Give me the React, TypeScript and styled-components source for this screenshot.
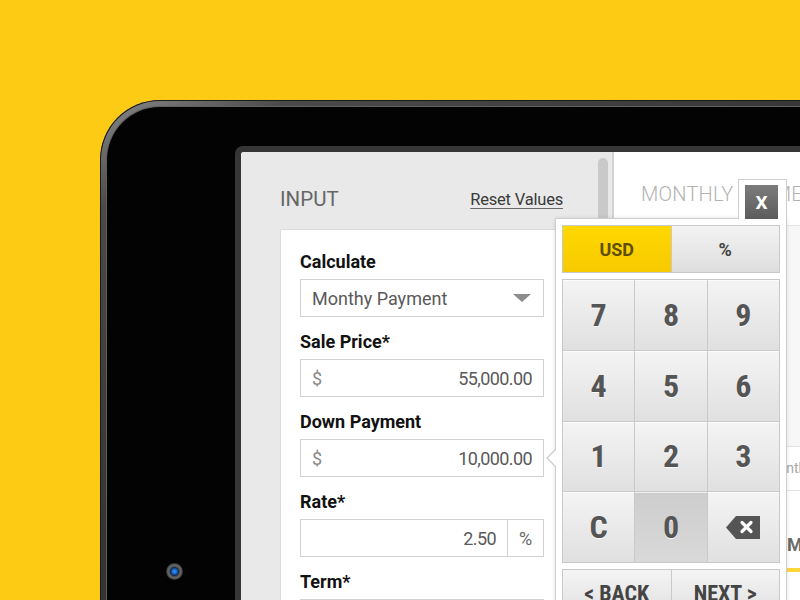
import React from "react";
import styled, { createGlobalStyle } from "styled-components";

const SANS = `Roboto, "Liberation Sans", Arial, sans-serif`;
const NARROW = `"Liberation Sans Narrow", "Arial Narrow", "Roboto Condensed", Roboto, sans-serif`;

const Global = createGlobalStyle`
  html, body { margin: 0; padding: 0; background: #fdcb14; overflow: hidden; }
  * { box-sizing: border-box; }
`;

const Stage = styled.div`
  width: 800px;
  height: 600px;
  overflow: hidden;
  padding: 100px 0 0 100px;
  background: #fdcb14;
  font-family: ${SANS};
`;

const Device = styled.div`
  width: 820px;
  height: 620px;
  padding: 7px;
  border-radius: 60px 0 0 0;
  background: linear-gradient(150deg, #8a8a8a 0%, #4a4a4a 10%, #353535 40%, #2b2b2b 100%);
  box-shadow: inset 0 0 0 1px #1a1a1a;
`;

const Bezel = styled.div`
  position: relative;
  height: 100%;
  background: #030303;
  border-radius: 53px 0 0 0;
  padding: 39px 0 0 128px;
  box-shadow: 0 0 0 1px #606060;
`;

const Camera = styled.div`
  position: absolute;
  left: 59px;
  top: 456px;
  width: 17px;
  height: 17px;
  border-radius: 50%;
  background: radial-gradient(circle, #3a96ff 0, #1a62c0 2.5px, #0e2c52 4px, #505050 5px, #6a6a6a 6.5px, #2a2a2a 8.5px);
`;

const ScreenFrame = styled.div`
  background: #363636;
  padding: 6px;
  border-radius: 8px 0 0 0;
`;

const Screen = styled.div`
  position: relative;
  display: flex;
  height: 470px;
  background: #fff;
  border-radius: 3px 0 0 0;
  overflow: hidden;
`;

const LeftPanel = styled.div`
  position: relative;
  flex: 0 0 373px;
  background: #e9e9e9;
  border-right: 2px solid #d3d3d3;
  padding: 35px 48px 0 39px;
`;

const ScrollThumb = styled.div`
  position: absolute;
  right: 4px;
  top: 6px;
  width: 10px;
  height: 200px;
  border-radius: 5px;
  background: #c9c9c9;
`;

const Header = styled.div`
  display: flex;
  justify-content: space-between;
  align-items: center;
  height: 25px;
  margin-bottom: 17px;
`;

const Title = styled.div`
  font-weight: 400;
  font-size: 20.5px;
  line-height: 25px;
  color: #666;
`;

const ResetLink = styled.a`
  font-size: 16.5px;
  color: #3a3a3a;
  text-decoration: underline;
  text-decoration-color: #6a6a6a;
  text-underline-offset: 3px;
  margin-right: 1px;
  letter-spacing: -0.2px;
`;

const Card = styled.div`
  background: #fff;
  border: 1px solid #dcdcdc;
  padding: 21px 19px 40px;
`;

const Field = styled.div`
  margin-bottom: 14px;
`;

const Label = styled.div`
  font-weight: 700;
  font-size: 18px;
  line-height: 22px;
  color: #121212;
  margin-bottom: 6px;
`;

const Box = styled.div`
  display: flex;
  align-items: center;
  height: 38px;
  border: 1px solid #d2d2d2;
  background: #fff;
  font-size: 18px;
  color: #555;
`;

const SelectText = styled.span`
  flex: 1;
  padding-left: 11px;
  color: #5a5a5a;
`;

const Caret = styled.span`
  width: 0;
  height: 0;
  margin-right: 12px;
  border-left: 9px solid transparent;
  border-right: 9px solid transparent;
  border-top: 8px solid #8c8c8c;
`;

const Prefix = styled.span`
  padding-left: 11px;
  color: #8a8a8a;
`;

const Value = styled.span`
  flex: 1;
  text-align: right;
  padding-right: 11px;
  letter-spacing: -0.6px;
  color: #5a5a5a;
`;

const Unit = styled.span`
  align-self: stretch;
  width: 36px;
  border-left: 1px solid #d2d2d2;
  display: flex;
  align-items: center;
  justify-content: center;
  color: #666;
`;

const RightPanel = styled.div`
  flex: 1;
  background: #fff;
`;

const RPHeader = styled.div`
  height: 74px;
  padding: 30px 0 0 27px;
  border-bottom: 1px solid #e4e4e4;
  font-weight: 300;
  font-size: 20px;
  line-height: 24px;
  letter-spacing: 0.2px;
  color: #b2b2b2;
  white-space: nowrap;
`;

const RPSummary = styled.div`
  height: 221px;
  background: #f7f7f7;
  border-bottom: 1px solid #e3e3e3;
`;

const RPRow = styled.div`
  height: 44px;
  line-height: 43px;
  padding-left: 152px;
  border-bottom: 1px solid #e3e3e3;
  font-size: 14px;
  color: #a8a8a8;
  white-space: nowrap;
`;

const RPStrong = styled.div`
  padding: 44px 0 0 173px;
  font-weight: 700;
  font-size: 18px;
  line-height: 20px;
  color: #6b6b6b;
  white-space: nowrap;
`;

const YellowBar = styled.div`
  margin-top: 13px;
  height: 4px;
  background: #ffd63a;
`;

/* Keypad popover */
const Popover = styled.div`
  position: absolute;
  left: 314px;
  top: 27px;
  width: 232px;
  display: flex;
  flex-direction: column;
  z-index: 2;
`;

const Tab = styled.div`
  align-self: flex-end;
  position: relative;
  z-index: 1;
  background: #fff;
  border: 1px solid #cfcfcf;
  border-bottom: none;
  padding: 5px 8px 0 6px;
  margin-bottom: -1px;
`;

const CloseButton = styled.div`
  width: 33px;
  height: 34px;
  display: flex;
  align-items: center;
  justify-content: center;
  background: linear-gradient(#7c7c7c, #5c5c5c);
  color: #fff;
  font-weight: 700;
  font-size: 19px;
`;

const Panel = styled.div`
  position: relative;
  background: #fff;
  border: 1px solid #cfcfcf;
  padding: 6px 6px 20px;
  box-shadow: 0 0 4px rgba(0, 0, 0, 0.12);

  &::before,
  &::after {
    content: "";
    position: absolute;
    width: 0;
    height: 0;
    border-style: solid;
  }
  &::before {
    left: -10px;
    top: 229px;
    border-width: 10px 10px 10px 0;
    border-color: transparent #cfcfcf transparent transparent;
  }
  &::after {
    left: -8px;
    top: 230px;
    border-width: 9px 9px 9px 0;
    border-color: transparent #fff transparent transparent;
  }
`;

const SegRow = styled.div`
  display: flex;
  gap: 1px;
  height: 48px;
  border: 1px solid #c9c9c9;
  background: #c9c9c9;
`;

const Segment = styled.div<{ $active?: boolean }>`
  flex: 1;
  display: flex;
  align-items: center;
  justify-content: center;
  font-weight: 700;
  font-size: 18px;
  color: ${(p) => (p.$active ? "#5e4f00" : "#444")};
  background: ${(p) =>
    p.$active
      ? "linear-gradient(#ffd800, #f7ca00)"
      : "linear-gradient(#f3f3f3, #dedede)"};
`;

const KeyGrid = styled.div`
  margin-top: 6px;
  display: grid;
  grid-template-columns: repeat(3, 1fr);
  grid-auto-rows: 69.75px;
  gap: 1px;
  border: 1px solid #c9c9c9;
  background: #c9c9c9;
`;

const Key = styled.div<{ $pressed?: boolean }>`
  display: flex;
  align-items: center;
  justify-content: center;
  font-family: ${NARROW};
  font-weight: 700;
  font-size: 32px;
  color: #555;
  text-shadow: 0 1px 0 rgba(255, 255, 255, 0.8);
  background: ${(p) =>
    p.$pressed
      ? "linear-gradient(#cdcdcd, #d9d9d9)"
      : "linear-gradient(#f4f4f4, #e0e0e0)"};
  box-shadow: inset 0 1px 0 rgba(255, 255, 255, 0.7);
`;

const NavRow = styled(SegRow)`
  margin-top: 6px;
`;

const NavButton = styled.div`
  flex: 1;
  display: flex;
  align-items: center;
  justify-content: center;
  font-family: ${NARROW};
  font-weight: 700;
  font-size: 22px;
  color: #444;
  background: linear-gradient(#f4f4f4, #e0e0e0);
`;

const BackspaceIcon = () => (
  <svg width="34" height="23" viewBox="0 0 34 23">
    <path d="M10 0 H34 V23 H10 L0 11.5 Z" fill="#555" />
    <path d="M16 6.5 L25 15.5 M25 6.5 L16 15.5" stroke="#fff" strokeWidth="3.2" strokeLinecap="round" />
  </svg>
);

const keys = ["7", "8", "9", "4", "5", "6", "1", "2", "3", "C", "0", "DEL"];

export default function App() {
  return (
    <>
      <Global />
      <Stage>
        <Device>
          <Bezel>
            <Camera />
            <ScreenFrame>
              <Screen>
                <LeftPanel>
                  <ScrollThumb />
                  <Header>
                    <Title>INPUT</Title>
                    <ResetLink>Reset Values</ResetLink>
                  </Header>
                  <Card>
                    <Field>
                      <Label>Calculate</Label>
                      <Box>
                        <SelectText>Monthy Payment</SelectText>
                        <Caret />
                      </Box>
                    </Field>
                    <Field>
                      <Label>Sale Price*</Label>
                      <Box>
                        <Prefix>$</Prefix>
                        <Value>55,000.00</Value>
                      </Box>
                    </Field>
                    <Field>
                      <Label>Down Payment</Label>
                      <Box>
                        <Prefix>$</Prefix>
                        <Value>10,000.00</Value>
                      </Box>
                    </Field>
                    <Field>
                      <Label>Rate*</Label>
                      <Box>
                        <Value>2.50</Value>
                        <Unit>%</Unit>
                      </Box>
                    </Field>
                    <Field>
                      <Label>Term*</Label>
                      <Box>
                        <Value>60</Value>
                      </Box>
                    </Field>
                  </Card>
                </LeftPanel>
                <RightPanel>
                  <RPHeader>MONTHLY PAYMENT</RPHeader>
                  <RPSummary />
                  <RPRow>Monthly</RPRow>
                  <RPStrong>Monthly Payment</RPStrong>
                  <YellowBar />
                </RightPanel>

                <Popover>
                  <Tab>
                    <CloseButton>X</CloseButton>
                  </Tab>
                  <Panel>
                    <SegRow>
                      <Segment $active>USD</Segment>
                      <Segment>%</Segment>
                    </SegRow>
                    <KeyGrid>
                      {keys.map((k) => (
                        <Key key={k} $pressed={k === "0"}>
                          {k === "DEL" ? <BackspaceIcon /> : k}
                        </Key>
                      ))}
                    </KeyGrid>
                    <NavRow>
                      <NavButton>&lt; BACK</NavButton>
                      <NavButton>NEXT &gt;</NavButton>
                    </NavRow>
                  </Panel>
                </Popover>
              </Screen>
            </ScreenFrame>
          </Bezel>
        </Device>
      </Stage>
    </>
  );
}
